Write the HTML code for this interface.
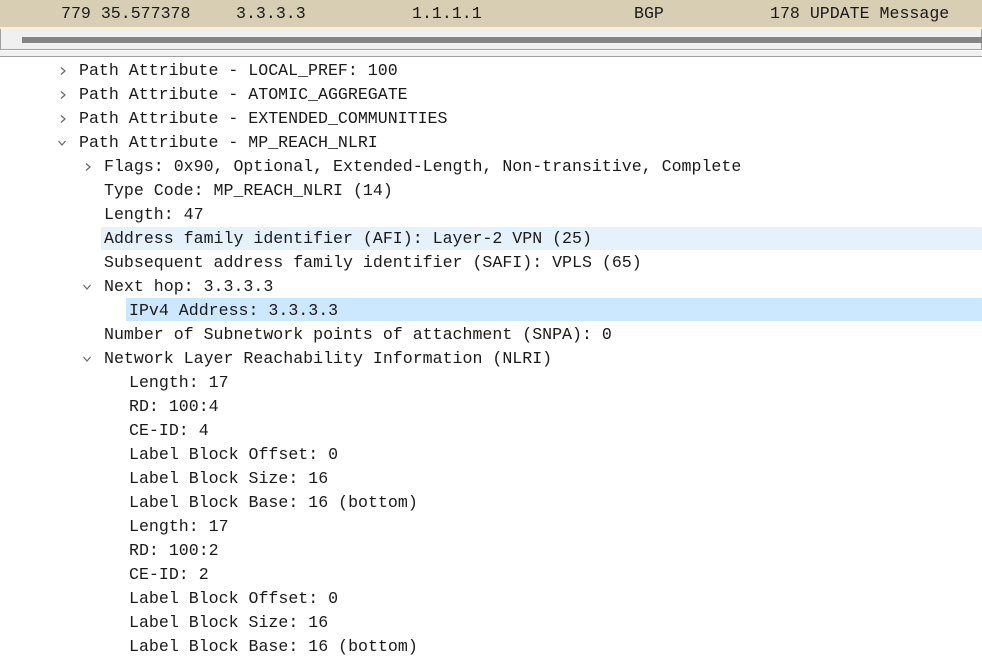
<!DOCTYPE html>
<html><head><style>
body{margin:0;width:982px;height:661px;overflow:hidden;background:#fff;font-family:"Liberation Mono",monospace;font-size:16.6px;color:#1a1a1a;position:relative}
.top{position:absolute;left:0;top:0;width:982px;height:27px;background:#d8ceb3;border-bottom:2px solid #f7efd9}
.top span{position:absolute;top:4px;white-space:pre}
.gray{position:absolute;left:0;top:29px;width:980px;height:20px;background:#f0f0f0;border:1px solid #a0a0a0;border-top:none}
.bar{position:absolute;left:22px;top:37px;width:960px;height:6px;background:#858585}
.sep{position:absolute;left:0;top:51px;width:982px;height:5px;background:#f0f0f0;border-bottom:1px solid #a0a0a0}
.r{position:absolute;height:24px;line-height:24px;white-space:pre;left:0;right:0}
.r svg{position:absolute;top:7px}
.hl1{position:absolute;left:101px;right:0;top:227px;height:23px;background:#e5f1fb}
.hl2{position:absolute;left:126px;right:0;top:298px;height:23px;background:#cce8ff}
</style></head><body>
<div class="top"><span style="left:61px">779 35.577378</span><span style="left:236px">3.3.3.3</span><span style="left:412px">1.1.1.1</span><span style="left:634px">BGP</span><span style="left:770px">178 UPDATE Message</span></div>
<div class="gray"></div><div class="bar"></div><div class="sep"></div>
<div class="hl1"></div><div class="hl2"></div>
<div class="r" style="top:59px"><svg style="left:58px" width="10" height="10"><path d="M3 1.5L7 5 3 8.5" fill="none" stroke="#666" stroke-width="1.2"/></svg><span style="position:absolute;left:79px">Path Attribute - LOCAL_PREF: 100</span></div>
<div class="r" style="top:83px"><svg style="left:58px" width="10" height="10"><path d="M3 1.5L7 5 3 8.5" fill="none" stroke="#666" stroke-width="1.2"/></svg><span style="position:absolute;left:79px">Path Attribute - ATOMIC_AGGREGATE</span></div>
<div class="r" style="top:107px"><svg style="left:58px" width="10" height="10"><path d="M3 1.5L7 5 3 8.5" fill="none" stroke="#666" stroke-width="1.2"/></svg><span style="position:absolute;left:79px">Path Attribute - EXTENDED_COMMUNITIES</span></div>
<div class="r" style="top:131px"><svg style="left:57px" width="10" height="10"><path d="M1.5 3L5 7 8.5 3" fill="none" stroke="#666" stroke-width="1.2"/></svg><span style="position:absolute;left:79px">Path Attribute - MP_REACH_NLRI</span></div>
<div class="r" style="top:155px"><svg style="left:83px" width="10" height="10"><path d="M3 1.5L7 5 3 8.5" fill="none" stroke="#666" stroke-width="1.2"/></svg><span style="position:absolute;left:104px">Flags: 0x90, Optional, Extended-Length, Non-transitive, Complete</span></div>
<div class="r" style="top:179px"><span style="position:absolute;left:104px">Type Code: MP_REACH_NLRI (14)</span></div>
<div class="r" style="top:203px"><span style="position:absolute;left:104px">Length: 47</span></div>
<div class="r" style="top:227px"><span style="position:absolute;left:104px">Address family identifier (AFI): Layer-2 VPN (25)</span></div>
<div class="r" style="top:251px"><span style="position:absolute;left:104px">Subsequent address family identifier (SAFI): VPLS (65)</span></div>
<div class="r" style="top:275px"><svg style="left:82px" width="10" height="10"><path d="M1.5 3L5 7 8.5 3" fill="none" stroke="#666" stroke-width="1.2"/></svg><span style="position:absolute;left:104px">Next hop: 3.3.3.3</span></div>
<div class="r" style="top:299px"><span style="position:absolute;left:129px">IPv4 Address: 3.3.3.3</span></div>
<div class="r" style="top:323px"><span style="position:absolute;left:104px">Number of Subnetwork points of attachment (SNPA): 0</span></div>
<div class="r" style="top:347px"><svg style="left:82px" width="10" height="10"><path d="M1.5 3L5 7 8.5 3" fill="none" stroke="#666" stroke-width="1.2"/></svg><span style="position:absolute;left:104px">Network Layer Reachability Information (NLRI)</span></div>
<div class="r" style="top:371px"><span style="position:absolute;left:129px">Length: 17</span></div>
<div class="r" style="top:395px"><span style="position:absolute;left:129px">RD: 100:4</span></div>
<div class="r" style="top:419px"><span style="position:absolute;left:129px">CE-ID: 4</span></div>
<div class="r" style="top:443px"><span style="position:absolute;left:129px">Label Block Offset: 0</span></div>
<div class="r" style="top:467px"><span style="position:absolute;left:129px">Label Block Size: 16</span></div>
<div class="r" style="top:491px"><span style="position:absolute;left:129px">Label Block Base: 16 (bottom)</span></div>
<div class="r" style="top:515px"><span style="position:absolute;left:129px">Length: 17</span></div>
<div class="r" style="top:539px"><span style="position:absolute;left:129px">RD: 100:2</span></div>
<div class="r" style="top:563px"><span style="position:absolute;left:129px">CE-ID: 2</span></div>
<div class="r" style="top:587px"><span style="position:absolute;left:129px">Label Block Offset: 0</span></div>
<div class="r" style="top:611px"><span style="position:absolute;left:129px">Label Block Size: 16</span></div>
<div class="r" style="top:635px"><span style="position:absolute;left:129px">Label Block Base: 16 (bottom)</span></div>
</body></html>
